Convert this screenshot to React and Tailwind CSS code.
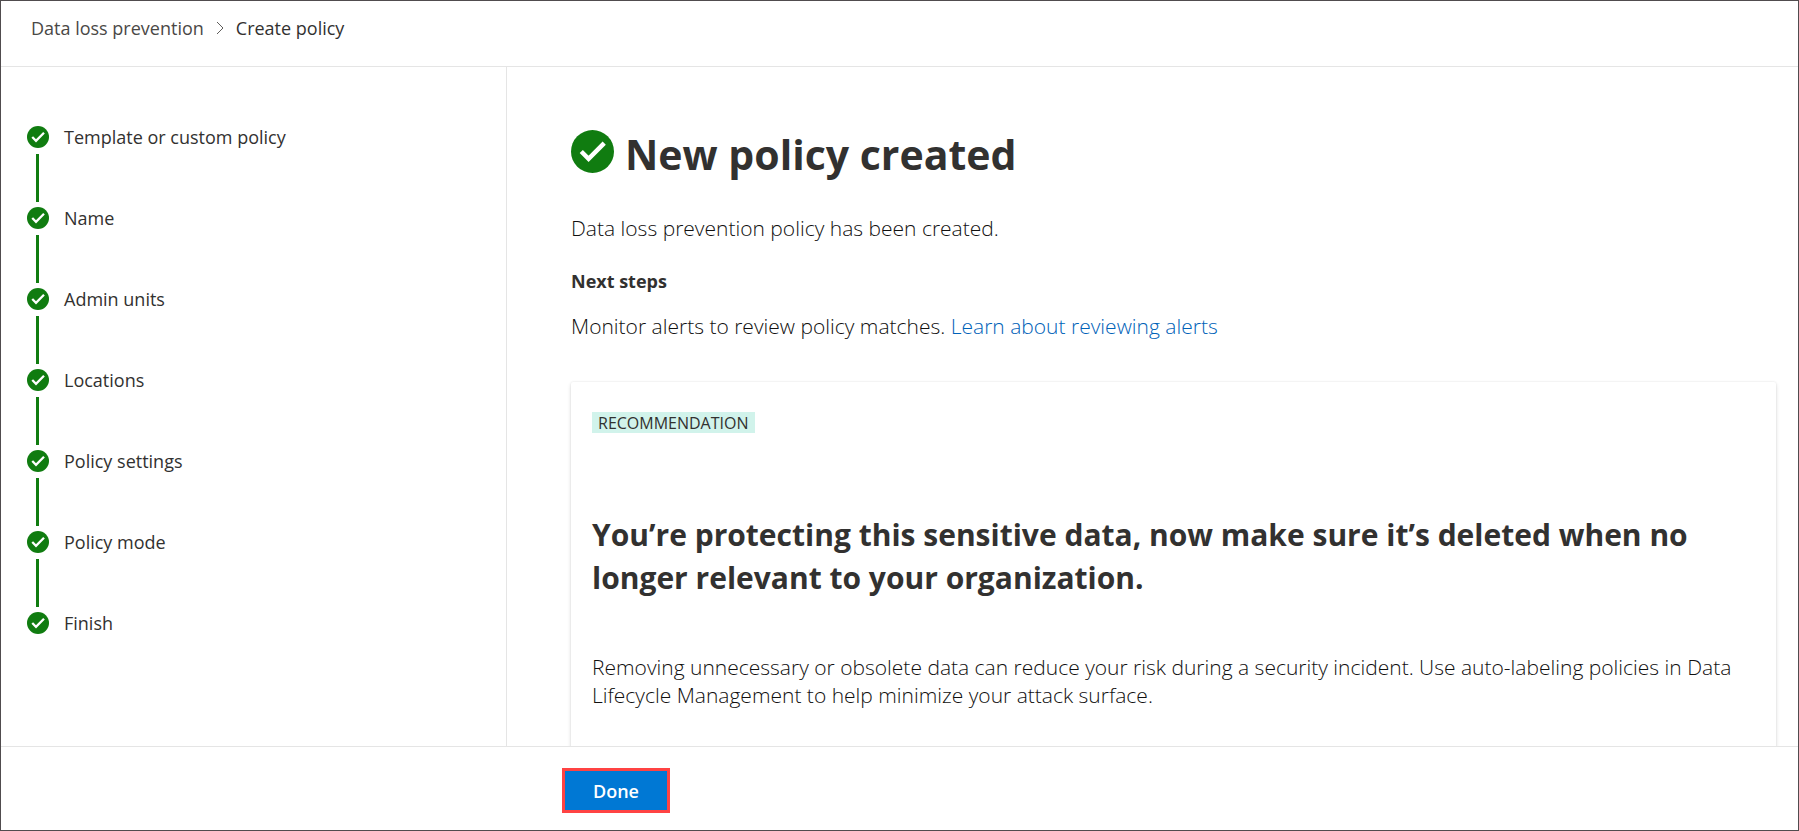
const steps = [
  'Template or custom policy',
  'Name',
  'Admin units',
  'Locations',
  'Policy settings',
  'Policy mode',
  'Finish',
];

function CheckCircle({ className }) {
  return (
    <svg viewBox="0 0 44 44" className={className} aria-hidden="true">
      <circle cx="22" cy="22" r="22" fill="#107c10" />
      <path d="M10.5 22 L18 29.5 L34 13.5" fill="none" stroke="#fff" strokeWidth="4.6" />
    </svg>
  );
}

function Breadcrumb() {
  return (
    <header className="shrink-0 border-b border-[#e5e5e5] px-[30px] pt-[15px] pb-[26px]">
      <nav aria-label="Breadcrumb" className="flex items-center text-[18px] leading-6">
        <a href="#policies" className="text-[#4a4846]">Data loss prevention</a>
        <svg viewBox="0 0 8 14" className="mx-3 h-[14px] w-2" aria-hidden="true">
          <path d="M1 1 L7 7 L1 13" fill="none" stroke="#605e5c" strokeWidth="1" />
        </svg>
        <span aria-current="page">Create policy</span>
      </nav>
    </header>
  );
}

function Steps() {
  return (
    <aside className="w-[506px] shrink-0 border-r border-[#e5e5e5] pt-[58px] pl-[26px]">
      <ol>
        {steps.map((step, i) => (
          <li key={step} className="flex gap-[15px]">
            <div className="flex w-[22px] flex-col pt-px">
              <CheckCircle className="size-[22px]" />
              {i < steps.length - 1 && <span className="mt-[6px] mb-1 ml-[9px] h-12 w-[3px] bg-[#107c10]" />}
            </div>
            <span className="text-[18px] leading-6">{step}</span>
          </li>
        ))}
      </ol>
    </aside>
  );
}

export default function App() {
  return (
    <div className="flex h-screen flex-col border border-[#504c4e] bg-white font-['Segoe_UI','Open_Sans',sans-serif] text-[#323130]">
      <Breadcrumb />
      <div className="flex min-h-0 flex-1">
        <Steps />
        <main className="min-w-0 flex-1 overflow-hidden pt-[57px] pr-[22px] pl-16">
          <div className="flex items-center gap-[11px]">
            <CheckCircle className="mb-[6px] size-[43px] shrink-0" />
            <h1 className="text-[41px] leading-[60px] font-bold">New policy created</h1>
          </div>
          <p className="mt-[30px] text-[21px] leading-7 font-light text-[#11100f]">Data loss prevention policy has been created.</p>
          <h2 className="mt-[27px] text-[18px] leading-6 font-bold">Next steps</h2>
          <p className="mt-[19px] text-[21px] leading-7 font-light text-[#11100f]">
            Monitor alerts to review policy matches.{' '}
            <a href="#alerts" className="text-[#0062b8]">Learn about reviewing alerts</a>
          </p>
          <section className="mt-[42px] rounded-[2px] px-[21px] pt-[30px] pb-16 shadow-[0_2px_4px_rgba(0,0,0,0.13),0_0_2px_rgba(0,0,0,0.11)]">
            <div className="flex">
              <span className="bg-[#d1f3eb] px-[6px] pt-px text-[16px] leading-5">RECOMMENDATION</span>
            </div>
            <h2 className="mt-[80px] text-[30px] leading-[43px] font-bold">
              You’re protecting this sensitive data, now make sure it’s deleted when no longer relevant to your organization.
            </h2>
            <p className="mt-[54px] text-[21px] leading-7 font-light text-[#11100f]">
              Removing unnecessary or obsolete data can reduce your risk during a security incident. Use auto-labeling policies in Data Lifecycle Management to help minimize your attack surface.
            </p>
          </section>
        </main>
      </div>
      <footer className="shrink-0 border-t border-[#e5e5e5] pt-[21px] pb-[17px] pl-[561px]">
        <button type="button" className="h-[45px] w-[108px] border-[3px] border-[#ff4343] bg-[#0078d4] text-[18px] leading-6 font-semibold text-white">
          Done
        </button>
      </footer>
    </div>
  );
}
